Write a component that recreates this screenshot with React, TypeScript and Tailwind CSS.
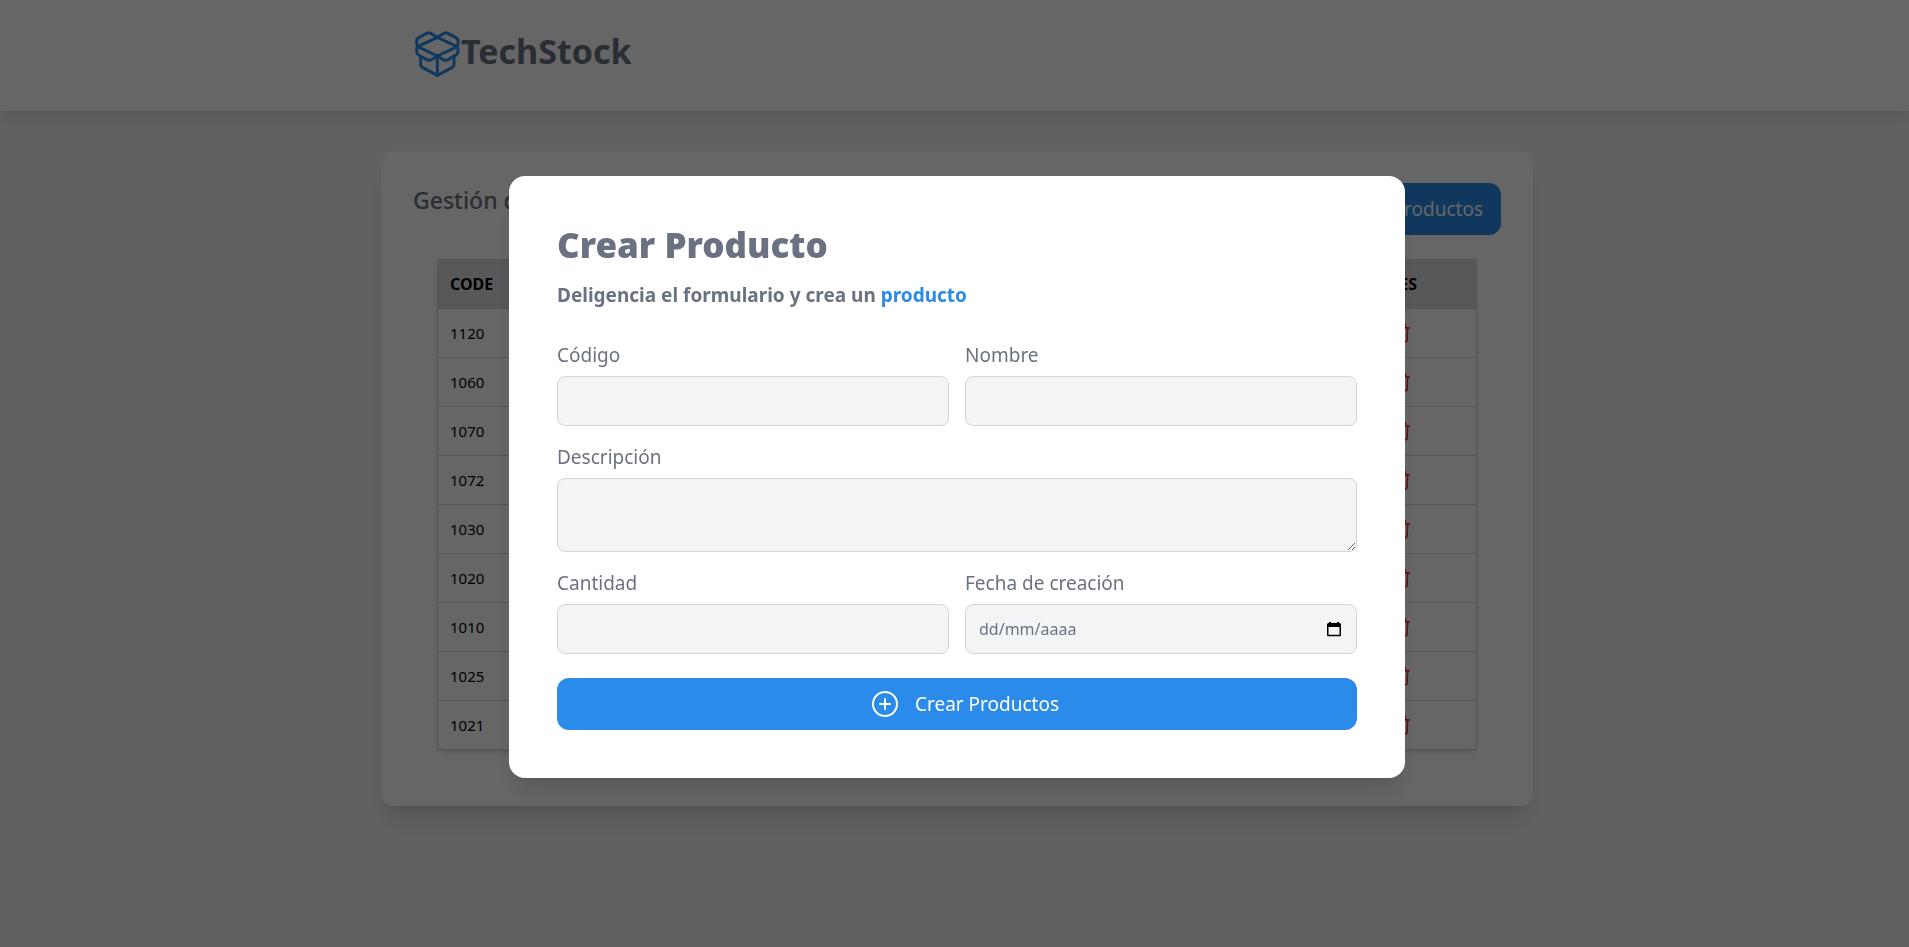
import React from "react";
import { AiOutlineDelete } from "react-icons/ai";
import { IoAddCircleOutline } from "react-icons/io5";

const codes = ["1120", "1060", "1070", "1072", "1030", "1020", "1010", "1025", "1021"];

const fieldClass =
  "block w-full rounded-lg border border-gray-300 bg-gray-100 p-3 text-base leading-6 text-gray-900";

function Logo() {
  return (
    <svg
      className="size-12 shrink-0 text-[#2a8bea]"
      viewBox="131 90 144 144"
      fill="none"
      stroke="currentColor"
      strokeWidth="9"
      strokeLinecap="round"
      strokeLinejoin="round"
      aria-hidden="true"
    >
      <path d="M204 112 L264 140 L204 168 L145 140 Z" />
      <path d="M204 112 L186 101 Q180 96 172 100 L148 113 Q142 117 142 123 V128 Q142 135 145 140" />
      <path d="M204 112 L222 101 Q228 96 236 100 L260 113 Q266 117 266 123 V128 Q266 135 264 140" />
      <path d="M145 140 Q142 144 142 149 V155 Q142 161 148 165 L172 179 Q180 183 186 179 L204 168" />
      <path d="M264 140 Q266 144 266 149 V155 Q266 161 260 165 L236 179 Q228 183 222 179 L204 168" />
      <path d="M154 170 V194 Q154 199 159 202 L204 226 L249 202 Q254 199 254 194 V170" />
      <path d="M204 168 V226" />
    </svg>
  );
}

function CalendarIcon() {
  return (
    <svg className="h-4 w-[14px]" viewBox="0 0 14 16" aria-hidden="true">
      <path
        fill="currentColor"
        fillRule="evenodd"
        d="M2 1h2v1h6V1h2v1h.5A1.5 1.5 0 0 1 14 3.500V14a1.300 1.300 0 0 1-1.300 1.300H1.300A1.300 1.300 0 0 1 0 14V3.500A1.500 1.500 0 0 1 1.500 2H2ZM1.500 6v7.800h11V6Z"
      />
    </svg>
  );
}

function CreateButton({ className = "", type = "button" }: { className?: string; type?: "button" | "submit" }) {
  return (
    <button
      type={type}
      className={`flex items-center justify-center gap-[14px] rounded-xl bg-[#2a8bea] px-[18px] py-2.5 text-[19px] leading-7 text-white ${className}`}
    >
      <IoAddCircleOutline className="ml-[14px] size-8" aria-hidden="true" />
      Crear Productos
    </button>
  );
}

function Field({ id, label, children }: { id: string; label: string; children: React.ReactNode }) {
  return (
    <div>
      <label htmlFor={id} className="mb-[6px] block text-[19px] leading-[30px]">
        {label}
      </label>
      {children}
    </div>
  );
}

function ProductDialog() {
  return (
    <div className="fixed inset-0 flex items-center justify-center bg-black/60 pt-[7px] pl-[5px]">
      <div
        role="dialog"
        aria-modal="true"
        aria-labelledby="dialog-title"
        className="w-full max-w-4xl rounded-2xl bg-white p-12 text-gray-500 shadow-xl"
      >
        <h2 id="dialog-title" className="text-[35px] leading-[42px] font-black">
          Crear Producto
        </h2>
        <p className="mt-[14px] text-[19px] leading-[30px] font-bold">
          Deligencia el formulario y crea un <span className="text-[#2a8bea]">producto</span>
        </p>
        <form className="mt-[30px] flex flex-col gap-4" onSubmit={(e) => e.preventDefault()}>
          <div className="grid grid-cols-2 gap-4">
            <Field id="codigo" label="Código">
              <input id="codigo" type="text" className={fieldClass} />
            </Field>
            <Field id="nombre" label="Nombre">
              <input id="nombre" type="text" className={fieldClass} />
            </Field>
          </div>
          <Field id="descripcion" label="Descripción">
            <textarea id="descripcion" rows={2} className={fieldClass} />
          </Field>
          <div className="grid grid-cols-2 gap-4">
            <Field id="cantidad" label="Cantidad">
              <input id="cantidad" type="number" className={fieldClass} />
            </Field>
            <Field id="fecha" label="Fecha de creación">
              <div className="flex items-center rounded-lg border border-gray-300 bg-gray-100 py-3 pr-[15px] pl-[13px] text-base leading-6">
                <input
                  id="fecha"
                  type="text"
                  inputMode="numeric"
                  placeholder="dd/mm/aaaa"
                  className="h-6 min-w-0 grow bg-transparent text-gray-900 outline-none placeholder:text-gray-500"
                />
                <button type="button" aria-label="Abrir calendario" className="text-black">
                  <CalendarIcon />
                </button>
              </div>
            </Field>
          </div>
          <CreateButton type="submit" className="mt-2 w-full" />
        </form>
      </div>
    </div>
  );
}

export default function App() {
  return (
    <div className="min-h-screen bg-[#f1f5f3] font-['Noto_Sans',sans-serif] text-gray-500">
      <header className="bg-white pt-[30px] pb-[33px] pl-[5px] shadow-lg">
        <div className="mx-auto flex max-w-6xl items-start px-8">
          <Logo />
          <h1 className="text-[34px] leading-[42px] font-bold">TechStock</h1>
        </div>
      </header>

      <main className="pt-10 pl-[5px]">
        <section className="mx-auto max-w-6xl rounded-xl bg-white p-8 shadow-xl">
          <div className="flex items-start justify-between">
            <h2 className="text-[23px] leading-[34px] font-medium">Gestión de productos</h2>
            <CreateButton />
          </div>
          <div className="p-6">
            <table className="w-full border-collapse rounded-lg border border-gray-300 text-left text-[15px] leading-6 text-black shadow-md">
              <thead className="bg-[#dcdce2] text-base uppercase">
                <tr className="border-b border-gray-300">
                  <th scope="col" className="p-3 font-bold">Code</th>
                  <th scope="col" className="w-[152px] p-3 font-bold">Acciones</th>
                </tr>
              </thead>
              <tbody>
                {codes.map((code) => (
                  <tr key={code} className="border-b border-gray-300">
                    <td className="p-3">{code}</td>
                    <td className="p-3">
                      <div className="flex w-[76px] justify-end">
                        <button type="button" aria-label={`Eliminar ${code}`} className="text-red-500">
                          <AiOutlineDelete className="size-6" />
                        </button>
                      </div>
                    </td>
                  </tr>
                ))}
              </tbody>
            </table>
          </div>
        </section>
      </main>

      <ProductDialog />
    </div>
  );
}
